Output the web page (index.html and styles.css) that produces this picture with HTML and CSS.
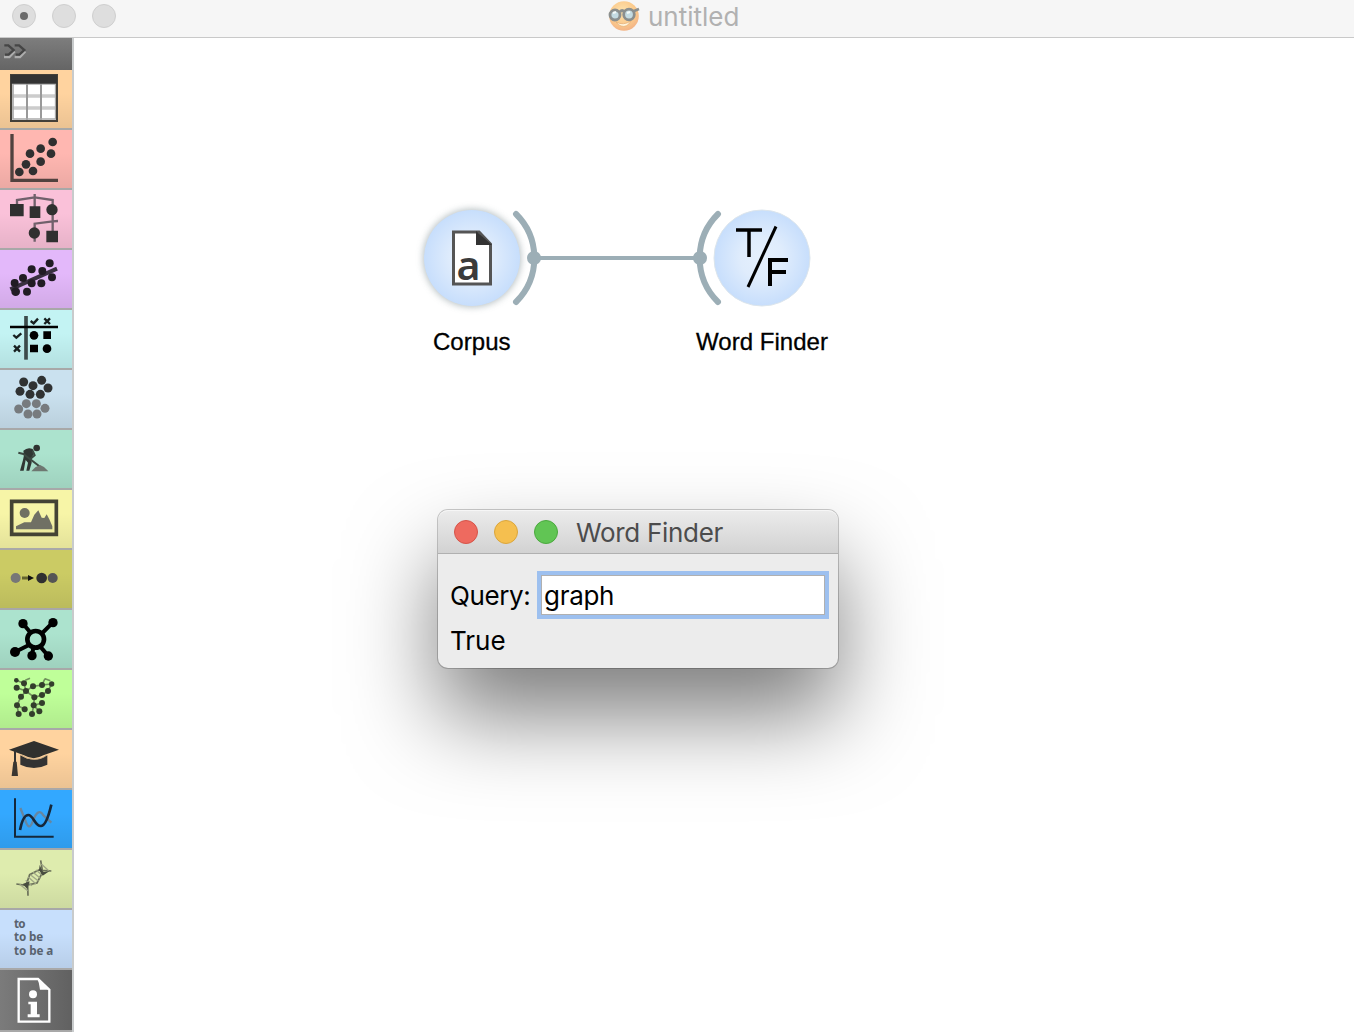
FILE: index.html
```html
<!DOCTYPE html>
<html lang="en">
<head>
<meta charset="utf-8">
<title>untitled</title>
<link rel="stylesheet" href="styles.css">
</head>
<body>
<header class="titlebar">
  <div class="lights"><i class="light edited"></i><i class="light"></i><i class="light"></i></div>
  <svg class="app-icon" viewBox="0 0 32 32">
    <defs><radialGradient id="face" cx=".45" cy=".35" r=".65"><stop offset="0" stop-color="#fde3ae"/><stop offset=".65" stop-color="#fbca8c"/><stop offset="1" stop-color="#f3b486"/></radialGradient></defs>
    <circle cx="16" cy="16" r="14.8" fill="url(#face)"/>
    <path d="M8 22Q15 26 23 21Q19 28 13 26Q10 25 8 22Z" fill="#fff6df" stroke="#e5b077" stroke-width=".8"/>
    <g fill="#c4dbe2" stroke="#8b8f8e" stroke-width="2.8"><circle cx="7" cy="15" r="5"/><circle cx="21" cy="14.500" r="5.3"/><path d="M12 12Q14 9 16.500 12M26 11L31 9" fill="none"/></g>
    <path d="M5 13l3-1M19 13l3-1" stroke="#f4faf9" stroke-width="2"/>
  </svg>
  <h1 class="doc-title">untitled</h1>
</header>
<main class="workspace">
  <nav class="toolbox">
    <div class="expander"><svg viewBox="0 114 216 96"><g fill="none" stroke-width="7"><path d="M44 154L28 171H12M76 154L60 171H44" stroke="#adadad"/><path d="M13 136H25L41 150L26 164H15M44 136H57L73 150L58 164H47" stroke="#454545"/></g></svg></div>
    <div class="cat data"><svg viewBox="0 210 216 174"><path fill="#fff" d="M33 225H171V363H33Z"/><path d="M36 288H168M36 324H168" stroke="#ccc" stroke-width="11"/><path d="M81 250V360M123 250V360" stroke="#999" stroke-width="6"/><path d="M39 252V357H167V252Z" fill="none" stroke="#aaa" stroke-width="5"/><path d="M33 225H171V363H33Z" fill="none" stroke="#444039" stroke-width="6"/><path fill="#333" d="M33 225H171V251H33Z"/></svg></div>
    <div class="cat visualize"><svg viewBox="0 6 216 174"><path d="M36 18V157H174" fill="none" stroke="#51423f" stroke-width="10"/><g fill="#303030"><circle cx="58" cy="132" r="13"/><circle cx="78" cy="109" r="13"/><circle cx="90" cy="77" r="13"/><circle cx="99" cy="129" r="13"/><circle cx="122" cy="62" r="13"/><circle cx="122" cy="101" r="13"/><circle cx="153" cy="77" r="13"/><circle cx="158" cy="42" r="13"/></g></svg></div>
    <div class="cat classify"><svg viewBox="0 186 216 174"><path d="M51 232V216L104 208L158 216V280M104 198V240M104 300V287L158 280L174 279M158 260V310M104 300V341" fill="none" stroke="#70606b" stroke-width="7"/><g fill="#303030"><path d="M30 228H71V265H30ZM89 235H121V270H89ZM139 308H174V343H139Z"/><circle cx="156" cy="245" r="17"/><circle cx="103" cy="315" r="17"/></g></svg></div>
    <div class="cat regression"><svg viewBox="0 6 216 174"><path d="M31 124L171 62" stroke="#393040" stroke-width="12"/><g fill="#211c24"><circle cx="44" cy="105" r="12"/><circle cx="47" cy="131" r="13"/><circle cx="69" cy="90" r="12"/><circle cx="81" cy="131" r="12"/><circle cx="95" cy="64" r="12"/><circle cx="95" cy="106" r="12"/><circle cx="124" cy="106" r="12"/><circle cx="127" cy="69" r="12"/><circle cx="149" cy="46" r="12"/><circle cx="156" cy="88" r="12"/></g></svg></div>
    <div class="cat evaluate"><svg viewBox="0 186 216 174"><path d="M78 204V335" stroke="#3c4b4b" stroke-width="11"/><path d="M30 237H174" stroke="#000" stroke-width="7"/><g fill="none" stroke="#172020" stroke-width="7"><path d="M92 219L101 226L114 212M40 261L49 269L64 256M133 211L150 228M150 211L133 228M42 293L60 311M60 293L42 311"/></g><circle cx="102" cy="262" r="13"/><circle cx="141" cy="302" r="13"/><path d="M130 250H153V273H130ZM90 290H114V313H90Z"/></svg></div>
    <div class="cat unsupervised"><svg viewBox="0 6 216 174"><g fill="#303233"><circle cx="60" cy="70" r="13.500"/><circle cx="71" cy="42" r="13.500"/><circle cx="99" cy="53" r="13.500"/><circle cx="125" cy="37" r="13.500"/><circle cx="144" cy="60" r="13.500"/><circle cx="90" cy="79" r="13.500"/><circle cx="121" cy="79" r="13.500"/></g><g fill="#777b7e"><circle cx="56" cy="123" r="13.500"/><circle cx="79" cy="107" r="13.500"/><circle cx="109" cy="107" r="13.500"/><circle cx="135" cy="121" r="13.500"/><circle cx="84" cy="138" r="13.500"/><circle cx="111" cy="138" r="13.500"/></g></svg></div>
    <div class="cat prototypes"><svg viewBox="0 186 216 174"><circle cx="110" cy="240" r="10" fill="#303331"/><path d="M70 248Q83 236 98 243L103 256L94 270L95 284L88 308H79L84 284L77 276L71 308H60L69 276L72 262Z" fill="#303633"/><path d="M55 254L70 258L121 297M98 248L104 262L90 274" fill="none" stroke="#3c4841" stroke-width="6"/><path d="M94 310L106 298L120 291L132 297L145 310Z" fill="#6e7771"/></svg></div>
    <div class="cat image"><svg viewBox="0 6 216 174"><path d="M35 40H169V139H35Z" fill="none" stroke="#444335" stroke-width="11"/><circle cx="74" cy="75" r="15" fill="#707062"/><path d="M48 124V115L73 103L93 103L103 80L115 67L125 89L133 90L140 79L148 94L157 115V124Z" fill="#707064"/></svg></div>
    <div class="cat spark"><svg viewBox="0 186 216 174"><path d="M66 270H91" stroke="#64642e" stroke-width="9"/><path d="M84 261L102 270L84 279Z" fill="#111"/><circle cx="47" cy="270" r="15" fill="#777"/><circle cx="125" cy="270" r="16" fill="#303030"/><circle cx="158" cy="270" r="15" fill="#555"/></svg></div>
    <div class="cat network"><svg viewBox="0 6 216 174"><g stroke="#000" stroke-width="12" fill="none"><path d="M69 47L90 72M158 44L127 75M45 132L87 111M96 143L100 118M145 144L121 116"/><circle cx="107" cy="94" r="25" stroke-width="14"/></g><circle cx="69" cy="47" r="14"/><circle cx="159" cy="44" r="14"/><circle cx="45" cy="132" r="15"/><circle cx="96" cy="143" r="14"/><circle cx="145" cy="144" r="14"/></svg></div>
    <div class="cat geo"><svg viewBox="0 186 216 174"><path d="M46 216L72 226L78 249L99 235L126 231L155 228L144 249L126 261L103 268L78 249L50 239M78 249L63 266L51 292L56 318M51 292L74 304M103 268L101 292L96 318M101 292L126 285M101 292L118 310M76 217L90 211M135 212L151 218M126 231L135 212" fill="none" stroke="#70915c" stroke-width="5"/><g fill="#333e2c"><circle cx="49" cy="217" r="7"/><circle cx="50" cy="239" r="9"/><circle cx="72" cy="226" r="9"/><circle cx="78" cy="249" r="9"/><circle cx="99" cy="235" r="9"/><circle cx="126" cy="231" r="9"/><circle cx="155" cy="228" r="8"/><circle cx="144" cy="249" r="9"/><circle cx="126" cy="261" r="9"/><circle cx="103" cy="268" r="9"/><circle cx="63" cy="266" r="9"/><circle cx="51" cy="292" r="9"/><circle cx="56" cy="318" r="9"/><circle cx="74" cy="304" r="9"/><circle cx="101" cy="292" r="9"/><circle cx="96" cy="318" r="9"/><circle cx="118" cy="310" r="9"/><circle cx="126" cy="285" r="9"/></g></svg></div>
    <div class="cat educational"><svg viewBox="0 6 216 174"><path d="M27 65L102 39L177 65L130 82Q101 99 72 82Z" fill="#30302e"/><path d="M61 82Q102 107 142 82V110Q102 130 61 110Z" fill="#333"/><path d="M62 80Q80 94 102 94Q127 94 141 80" fill="none" stroke="#cbaa80" stroke-width="3"/><path d="M45 69V113" stroke="#333" stroke-width="6"/><path d="M40 101H50L54 144H35Z" fill="#3a3631"/></svg></div>
    <div class="cat timeseries"><svg viewBox="0 186 216 174"><path d="M45 211V326H161" fill="none" stroke="#15283b" stroke-width="6"/><path d="M61 240L75 275Q87 312 98 281Q115 236 130 262L154 284" fill="none" stroke="#6686a1" stroke-width="7"/><path d="M60 306Q69 261 85 261C100 261 105 295 123 294Q139 294 154 230" fill="none" stroke="#15283b" stroke-width="8"/></svg></div>
    <div class="cat bio"><svg viewBox="0 6 216 174"><path d="M49 108L78 112L89 80L116 66L154 69M84 143L83 111L111 105L128 72L122 37" fill="none" stroke="#6a7059" stroke-width="5"/><path d="M77 97L96 113M84 86L108 108M91 80L116 100M99 73L121 91M108 66L125 80M59 109L83 128M124 48L146 68" stroke="#a0a886" stroke-width="4"/><path d="M68 108L89 100L82 123ZM119 51L129 72L149 69L128 83L117 66Z" fill="#484d40"/></svg></div>
    <div class="cat text"><svg viewBox="0 186 216 174"><g class="words"><text x="42" y="240" textLength="35">to</text><text x="42" y="279" textLength="88">to be</text><text x="42" y="321" textLength="118">to be a</text></g></svg></div>
    <div class="cat info"><svg viewBox="0 366 216 180"><path d="M56 393H114L148 425V521H56Z" fill="none" stroke="#fff" stroke-width="7"/><path d="M111 390L151 425H120Q118 404 111 390Z" fill="#fff"/><circle cx="99" cy="439" r="12" fill="#fff"/><path d="M85 461H111V499H119V508H83V499H92V469H85Z" fill="#fff"/></svg></div>
  </nav>
  <section class="canvas">
    <svg class="scheme" viewBox="74 38 1280 994">
      <defs>
        <radialGradient id="node"><stop offset="0" stop-color="#e5f0fd"/><stop offset=".45" stop-color="#dfecfc"/><stop offset="1" stop-color="#c7defc"/></radialGradient>
        <filter id="glow" x="-20%" y="-20%" width="140%" height="140%"><feGaussianBlur stdDeviation="3.500"/></filter>
      </defs>
      <circle cx="472" cy="258" r="49" fill="#9eaaae" opacity=".75" filter="url(#glow)"/>
      <circle cx="472" cy="258" r="48" fill="url(#node)"/>
      <circle cx="762" cy="258" r="48" fill="url(#node)" stroke="#dce5ec"/>
      <g fill="none" stroke="#9caeb6" stroke-linecap="round"><path d="M516 214A62 62 0 0 1 516 302M718 214A62 62 0 0 0 718 302" stroke-width="6"/><path d="M534 258H700" stroke-width="4"/></g>
      <g fill="#9caeb6"><circle cx="534" cy="258" r="7"/><circle cx="700" cy="258" r="7"/></g>
      <path d="M453.500 232H479L490.500 244V284H453.500Z" fill="#fff" stroke="#555" stroke-width="3"/>
      <path d="M476 231L492 245H476Z" fill="#333"/>
      <text class="glyph-a" x="456.500" y="279.500" textLength="24" lengthAdjust="spacingAndGlyphs">a</text>
      <g fill="none" stroke="#000"><path d="M736 230H762M749 230V257" stroke-width="3.500"/><path d="M776 226.500L748 287" stroke-width="3"/><path d="M788 260H770V286M770 272H786" stroke-width="4"/></g>
      <g class="label"><text x="433" y="350" textLength="77.500">Corpus</text><text x="696" y="350" textLength="132">Word Finder</text></g>
    </svg>
    <div class="dialog">
      <div class="dialog-bar"><i class="dot red"></i><i class="dot yellow"></i><i class="dot green"></i><span class="dialog-title">Word Finder</span></div>
      <div class="dialog-body">
        <div class="query"><label for="q" class="query-label">Query:</label><input id="q" class="field" type="text" value="graph"></div>
        <div class="result">True</div>
      </div>
    </div>
  </section>
</main>
</body>
</html>
```
FILE: styles.css
```css
* { box-sizing: border-box; }
body { margin: 0; width: 1354px; height: 1032px; overflow: hidden; background: #fff; font-family: Inter, "Liberation Sans", sans-serif; display: flex; flex-direction: column; }
svg { display: block; }
.titlebar { height: 38px; flex: none; background: #f6f6f6; border-bottom: 1px solid #c9c9c9; display: grid; grid-template-columns: 608px 32px auto; align-items: center; }
.lights { display: flex; gap: 16px; padding: 0 0 5px 12px; }
.light { width: 24px; height: 24px; border-radius: 50%; background: #dedede; border: 1px solid #cfcfcf; display: grid; place-items: center; }
.edited::after { content: ""; width: 8px; height: 8px; border-radius: 50%; background: #6b6b6b; }
.app-icon { width: 32px; height: 32px; margin-bottom: 5px; }
.doc-title { margin: 0 0 3px 8px; font-size: 26px; line-height: 32px; font-weight: 400; color: #b1b1b1; letter-spacing: 0; }
.workspace { flex: 1; min-height: 0; display: flex; }
.toolbox { width: 74px; flex: none; border-right: 2px solid #c8cbcc; }
.toolbox svg { width: 72px; height: 58px; }
.toolbox .expander, .expander svg { height: 32px; }
.expander { background: linear-gradient(#7d7d7d, #656565); }
.cat { height: 60px; border-bottom: 2px solid #a8a8a8; background-image: linear-gradient(transparent 40%, rgba(0, 0, 0, .08)); }
.data, .educational { background-color: #ffd39f; }
.visualize { background-color: #ffb7b1; }
.classify { background-color: #fac1d9; }
.regression { background-color: #e3b8fa; }
.evaluate { background-color: #c3f3f3; }
.unsupervised { background-color: #cae1ef; }
.prototypes, .network { background-color: #ace3ce; }
.image { background-color: #f7f5a7; }
.spark { background-color: #cbcb64; }
.geo { background-color: #bfff99; }
.timeseries { background-color: #33a8ff; }
.bio { background-color: #deecae; }
.text { background-color: #c7dffc; }
.info { height: 62px; background: linear-gradient(90deg, #7b7b7b, #616161); }
.toolbox .info svg { height: 60px; }
.words { font: 700 35px "Noto Sans", sans-serif; fill: #59636f; }
.canvas { position: relative; flex: 1; }
.scheme { width: 1280px; height: 994px; }
.label { font: 24px "Liberation Sans", sans-serif; fill: #000; stroke: #000; stroke-width: .3px; }
.glyph-a { font: 600 39px "Noto Sans", sans-serif; fill: #3b3b3b; }
.dialog { position: absolute; left: 364px; top: 472px; width: 400px; height: 158px; border-radius: 10px; background: #ececec; box-shadow: 0 0 0 1px rgba(0, 0, 0, .2), 0 48px 88px rgba(0, 0, 0, .51); }
.dialog-bar { height: 44px; border-radius: 10px 10px 0 0; background: linear-gradient(#ebebeb, #d2d2d2); border-top: 1px solid #f6f6f6; border-bottom: 1px solid #b0b0b0; display: flex; align-items: center; gap: 16px; padding-left: 16px; }
.dot { width: 24px; height: 24px; border-radius: 50%; border: 1px solid; }
.red { background: #ee6a5f; border-color: #d65449; }
.yellow { background: #f5bf4f; border-color: #dba63b; }
.green { background: #61c554; border-color: #4ba93e; }
.dialog-title { font-size: 26px; line-height: 32px; color: #4c4c4c; margin: 2px 0 0 2px; letter-spacing: -.3px; }
.dialog-body { padding: 17px 9px 0 12px; font-size: 26px; color: #000; }
.query { display: flex; justify-content: space-between; align-items: center; }
.query-label { letter-spacing: -.4px; }
.field { width: 284px; height: 40px; margin: 4px; padding: 0 2px; border: 1px solid #b0b0b0; outline: none; background: #fff; font: inherit; color: #000; letter-spacing: -.3px; border-radius: 0; box-shadow: 0 0 0 4px #9dc0ef; }
.result { line-height: 32px; margin-top: 6px; letter-spacing: 0; }
```
